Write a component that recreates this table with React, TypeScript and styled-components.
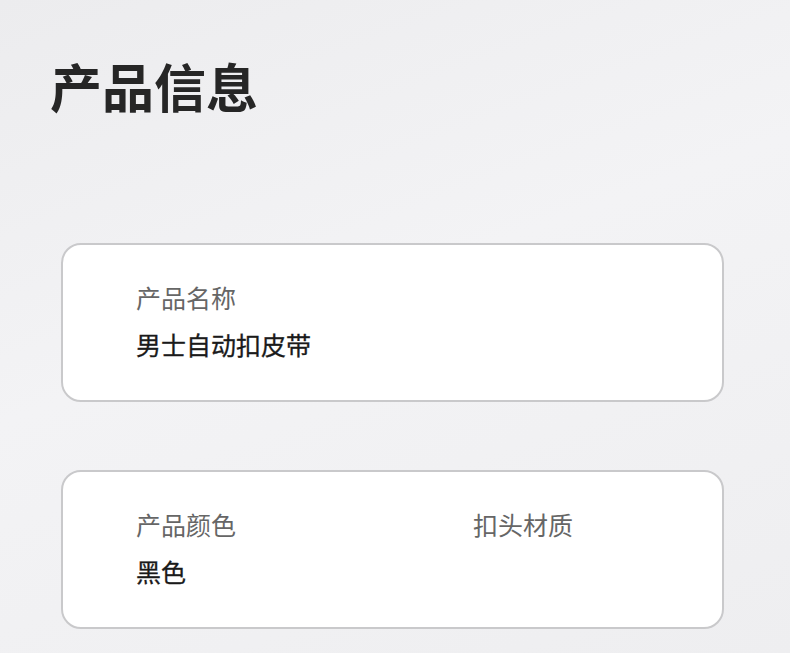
import styled, { createGlobalStyle } from "styled-components";

const GlobalStyle = createGlobalStyle`
  html, body {
    margin: 0;
    padding: 0;
  }
  body {
    font-family: "Noto Sans CJK SC", "Noto Sans", sans-serif;
    background: #efeff1;
  }
`;

const Page = styled.div`
  width: 790px;
  height: 653px;
  overflow: hidden;
  box-sizing: border-box;
  padding: 60px 0 0 50px;
  background: linear-gradient(160deg, #ececee 0%, #f3f3f5 45%, #eeeef0 100%);
`;

const Title = styled.h1`
  margin: 0;
  font-size: 52px;
  line-height: 52px;
  font-weight: 700;
  color: #262626;
  letter-spacing: 0;
`;

const Card = styled.section<{ $top: number }>`
  box-sizing: border-box;
  width: 663px;
  height: 159px;
  margin: ${(p) => p.$top}px 0 0 11px;
  padding: 40px 0 0 73px;
  background: #ffffff;
  border: 2px solid #c9c9cb;
  border-radius: 20px;
  display: grid;
  grid-template-columns: 337px 1fr;
  align-content: start;
`;

const Field = styled.div`
  display: flex;
  flex-direction: column;
  gap: 22px;
`;

const Label = styled.div`
  font-size: 25px;
  line-height: 25px;
  color: #666666;
`;

const Value = styled.div`
  font-size: 25px;
  line-height: 25px;
  color: #1a1a1a;
  -webkit-text-stroke: 0.3px #1a1a1a;
`;

export default function App() {
  return (
    <>
      <GlobalStyle />
      <Page>
        <Title>产品信息</Title>
        <Card $top={131}>
          <Field>
            <Label>产品名称</Label>
            <Value>男士自动扣皮带</Value>
          </Field>
        </Card>
        <Card $top={68}>
          <Field>
            <Label>产品颜色</Label>
            <Value>黑色</Value>
          </Field>
          <Field>
            <Label>扣头材质</Label>
          </Field>
        </Card>
      </Page>
    </>
  );
}
